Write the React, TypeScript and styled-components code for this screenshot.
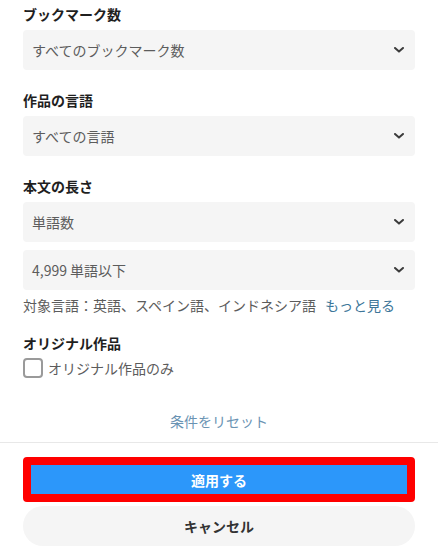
import styled, { createGlobalStyle } from "styled-components"

const GlobalStyle = createGlobalStyle`
	body {
		margin: 0;
		background: #ffffff;
		font-family: "Noto Sans CJK JP", "Noto Sans", sans-serif;
		font-size: 14px;
		color: #1f1f1f;
	}
`

const s = {
	Page: styled.div`
		display: flex;
		flex-direction: column;
		width: 438px;
	`,

	Form: styled.div`
		display: flex;
		flex-direction: column;
		padding: 4px 23px 0;
	`,

	Section: styled.div<{ $top: number }>`
		display: flex;
		flex-direction: column;
		margin-top: ${p => p.$top}px;
	`,

	Title: styled.div`
		font-size: 14px;
		font-weight: bold;
		line-height: 20px;
		color: #1f1f1f;
		margin-bottom: 6px;
	`,

	Select: styled.div<{ $gap?: number }>`
		display: flex;
		align-items: center;
		justify-content: space-between;
		height: 40px;
		padding: 0 11px 0 9px;
		margin-top: ${p => p.$gap ?? 0}px;
		background: #f5f5f5;
		border-radius: 4px;
		font-size: 14px;
		color: #5c5c5c;
	`,

	Chevron: styled.svg`
		width: 10px;
		height: 6px;
	`,

	Note: styled.div`
		margin-top: 5px;
		font-size: 14px;
		line-height: 20px;
		color: #5c5c5c;
	`,

	Link: styled.span`
		color: #3d7699;
		margin-left: 9px;
	`,

	CheckRow: styled.label`
		display: flex;
		align-items: center;
		gap: 5px;
		height: 20px;
		margin-top: -1px;
		font-size: 14px;
		color: #5c5c5c;
	`,

	Box: styled.span`
		width: 16px;
		height: 16px;
		border: 2px solid #9a9a9a;
		border-radius: 4px;
	`,

	Reset: styled.div`
		margin-top: 33px;
		text-align: center;
		font-size: 14px;
		line-height: 20px;
		color: #6a93b3;
	`,

	Divider: styled.div`
		margin-top: 11px;
		height: 1px;
		background: #e8e8e8;
	`,

	Footer: styled.div`
		display: flex;
		flex-direction: column;
		gap: 4px;
		padding: 14px 23px 0;
	`,

	Apply: styled.div`
		display: flex;
		align-items: center;
		justify-content: center;
		height: 29px;
		border: 8px solid #ff0000;
		border-radius: 4px;
		background: #2c97fa;
		color: #ffffff;
		font-size: 14px;
		font-weight: bold;
	`,

	Cancel: styled.div`
		display: flex;
		align-items: center;
		justify-content: center;
		height: 40px;
		border-radius: 20px;
		background: #f5f5f5;
		color: #333333;
		font-size: 14px;
		font-weight: bold;
	`,
}

function Chevron() {
	return (
		<s.Chevron viewBox="0 0 10 6" aria-hidden={true}>
			<path d="M1 1l4 3.6L9 1" fill="none" stroke="#3b3b3b" strokeWidth="2" strokeLinecap="round" strokeLinejoin="round" />
		</s.Chevron>
	)
}

function Select({ label, gap }: { label: string, gap?: number }) {
	return (
		<s.Select $gap={gap}>
			<span>{label}</span>
			<Chevron />
		</s.Select>
	)
}

export default function App() {
	return (
		<s.Page>
			<GlobalStyle />
			<s.Form>
				<s.Section $top={0}>
					<s.Title>ブックマーク数</s.Title>
					<Select label="すべてのブックマーク数" />
				</s.Section>
				<s.Section $top={20}>
					<s.Title>作品の言語</s.Title>
					<Select label="すべての言語" />
				</s.Section>
				<s.Section $top={20}>
					<s.Title>本文の長さ</s.Title>
					<Select label="単語数" />
					<Select label="4,999 単語以下" gap={8} />
					<s.Note>
						対象言語：英語、スペイン語、インドネシア語<s.Link>もっと見る</s.Link>
					</s.Note>
				</s.Section>
				<s.Section $top={18}>
					<s.Title>オリジナル作品</s.Title>
					<s.CheckRow>
						<s.Box />
						オリジナル作品のみ
					</s.CheckRow>
				</s.Section>
				<s.Reset>条件をリセット</s.Reset>
			</s.Form>
			<s.Divider />
			<s.Footer>
				<s.Apply>適用する</s.Apply>
				<s.Cancel>キャンセル</s.Cancel>
			</s.Footer>
		</s.Page>
	)
}
